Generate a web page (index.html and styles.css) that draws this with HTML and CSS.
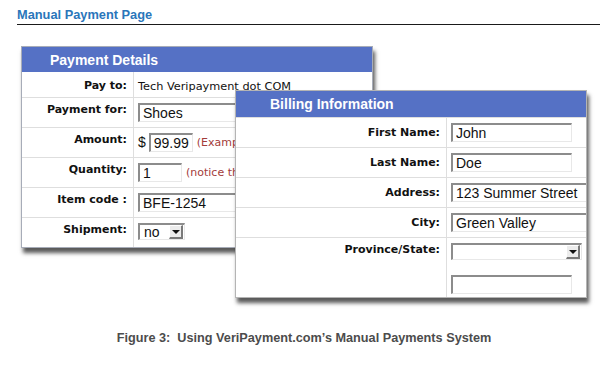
FILE: index.html
```html
<!DOCTYPE html>
<html lang="en">
<head>
    <meta charset="UTF-8">
    <meta name="viewport" content="width=device-width, initial-scale=1.0">
    <title>Manual Payment Page</title>
    <link rel="stylesheet" href="styles.css">
</head>

<body>
    <h1 class="page-title">Manual Payment Page</h1>

    <div class="figure">
        <!-- first window: payment details -->
        <div class="panel payment">
            <div class="panel-head">Payment Details</div>
            <div class="row row-first">
                <div class="label">Pay to:</div>
                <div class="value"><span class="plain">Tech Veripayment dot COM</span></div>
            </div>
            <div class="row">
                <div class="label">Payment for:</div>
                <div class="value"><input class="field field-wide" type="text" value="Shoes"></div>
            </div>
            <div class="row">
                <div class="label">Amount:</div>
                <div class="value">
                    <span class="currency">$</span>
                    <input class="field field-small" type="text" value="99.99">
                    <span class="hint">(Example: 10.00)</span>
                </div>
            </div>
            <div class="row">
                <div class="label">Quantity:</div>
                <div class="value">
                    <input class="field field-small" type="text" value="1">
                    <span class="hint">(notice the quantity)</span>
                </div>
            </div>
            <div class="row">
                <div class="label">Item code :</div>
                <div class="value"><input class="field field-wide" type="text" value="BFE-1254"></div>
            </div>
            <div class="row">
                <div class="label">Shipment:</div>
                <div class="value">
                    <div class="select select-small"><span>no</span><span class="select-btn"></span></div>
                </div>
            </div>
        </div>

        <!-- second window lies over the first one -->
        <div class="panel billing">
            <div class="panel-head">Billing Information</div>
            <div class="row">
                <div class="label">First Name:</div>
                <div class="value"><input class="field" type="text" value="John"></div>
            </div>
            <div class="row">
                <div class="label">Last Name:</div>
                <div class="value"><input class="field" type="text" value="Doe"></div>
            </div>
            <div class="row">
                <div class="label">Address:</div>
                <div class="value"><input class="field field-wide" type="text" value="123 Summer Street"></div>
            </div>
            <div class="row">
                <div class="label">City:</div>
                <div class="value"><input class="field field-wide" type="text" value="Green Valley"></div>
            </div>
            <div class="row row-tall">
                <div class="label">Province/State:</div>
                <div class="value value-stack">
                    <div class="select select-large"><span></span><span class="select-btn"></span></div>
                    <input class="field" type="text" value="">
                </div>
            </div>
        </div>
    </div>

    <p class="caption">Figure 3:&nbsp; Using VeriPayment.com’s Manual Payments System</p>
</body>
</html>
```

FILE: styles.css
```css
body {
    font-family: "DejaVu Sans", Verdana, sans-serif;
    background-color: #fff;
    color: #111;
    margin: 0;
    padding: 0;
}

.page-title {
    font-family: "Liberation Sans", Arial, sans-serif;
    font-size: 12.8px;
    line-height: 15px;
    font-weight: bold;
    color: #2a76ba;
    margin: 0 8px 0 17px;
    padding: 7px 0 2px;
    border-bottom: 1px solid #1a1a1a;
}

.figure {
    position: relative;
    height: 284px;
    margin-top: 21px;
}

.panel {
    box-sizing: border-box;
    width: 352px;
    background-color: #fff;
    border: 1px solid #a7acb8;
    box-shadow: 2px 5px 4px rgba(0, 0, 0, 0.65);
    overflow: hidden;
}

.payment {
    margin-left: 21px;
}

.billing {
    position: absolute;
    left: 235px;
    top: 44px;
    height: 208px;
    border-color: #b4b4b4;
}

.panel-head {
    background-color: #5571c5;
    color: #fff;
    font-family: "Liberation Sans", Arial, sans-serif;
    font-size: 14px;
    font-weight: bold;
    height: 25px;
    line-height: 26px;
    padding-left: 28px;
}

.billing .panel-head {
    height: 26px;
    line-height: 26px;
    padding-left: 34px;
}

.row {
    display: grid;
    grid-template-columns: 112px 1fr;
    height: 30px;
    box-sizing: border-box;
    border-top: 1px solid #dedede;
}

.row-first {
    height: 25px;
    border-top: 0;
}

.billing .row {
    grid-template-columns: 211px 1fr;
}

.billing .row-tall {
    height: 60px;
}

.label {
    box-sizing: border-box;
    border-right: 1px solid #dedede;
    text-align: right;
    font-size: 11px;
    line-height: 14px;
    font-weight: bold;
    padding: 5px 6px 0 0;
    white-space: nowrap;
}

.row-first .label {
    padding-top: 7px;
}

.billing .label {
    padding-top: 8px;
}

.billing .row-tall .label {
    padding-top: 5px;
}

.value {
    display: flex;
    align-items: flex-start;
    padding: 5px 0 0 4px;
    white-space: nowrap;
}

.row-first .value {
    padding-top: 8px;
}

.value-stack {
    flex-direction: column;
    gap: 15px;
}

.plain {
    font-size: 11.3px;
    line-height: 14px;
}

.currency {
    font-family: "Liberation Sans", Arial, sans-serif;
    font-size: 14px;
    line-height: 19px;
    margin-right: 3px;
}

.hint {
    color: #a33c3a;
    font-size: 11px;
    line-height: 19px;
    margin-left: 4px;
}

.field {
    box-sizing: border-box;
    width: 121px;
    height: 19px;
    margin: 0;
    padding: 0 3px;
    font-family: "Liberation Sans", Arial, sans-serif;
    font-size: 14px;
    color: #111;
    background-color: #fff;
    border-top: 2px solid #8c8c8c;
    border-left: 2px solid #8c8c8c;
    border-right: 1px solid #e8e8e8;
    border-bottom: 1px solid #e8e8e8;
    outline: none;
}

.field-small {
    width: 44px;
}

.field-wide {
    width: 170px;
}

.select {
    box-sizing: border-box;
    display: flex;
    align-items: center;
    justify-content: space-between;
    height: 17px;
    padding: 0 1px 0 4px;
    font-family: "Liberation Sans", Arial, sans-serif;
    font-size: 14px;
    background-color: #fff;
    border-top: 2px solid #8c8c8c;
    border-left: 2px solid #8c8c8c;
    border-right: 1px solid #e8e8e8;
    border-bottom: 1px solid #e8e8e8;
}

.select-small {
    width: 47px;
}

.select-large {
    width: 131px;
}

.select-btn {
    position: relative;
    box-sizing: border-box;
    width: 14px;
    height: 14px;
    background-color: #ececec;
    border-top: 1px solid #fff;
    border-left: 1px solid #fff;
    border-right: 2px solid #7a7a7a;
    border-bottom: 2px solid #7a7a7a;
}

.select-btn::after {
    content: "";
    position: absolute;
    left: 2px;
    top: 4px;
    border-left: 4px solid transparent;
    border-right: 4px solid transparent;
    border-top: 4px solid #111;
}

.caption {
    font-family: "Liberation Sans", Arial, sans-serif;
    font-size: 12.7px;
    line-height: 16px;
    font-weight: bold;
    color: #4c4c4c;
    text-align: center;
    margin: 0;
    padding-left: 0;
}
```
